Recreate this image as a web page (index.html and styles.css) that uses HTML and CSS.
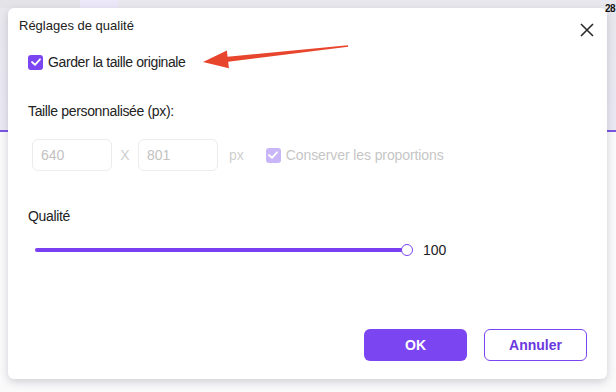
FILE: index.html
```html
<!DOCTYPE html>
<html lang="fr">
<head>
    <meta charset="UTF-8">
    <meta name="viewport" content="width=device-width, initial-scale=1.0">
    <title>Réglages de qualité</title>
    <link rel="stylesheet" href="styles.css">
</head>
<body>
    <!-- app behind the dialog -->
    <div class="app">
        <div class="app-top">
            <div class="app-tabs">
                <span class="tab-gray"></span>
                <span class="tab-active"></span>
            </div>
            <span class="app-count">28</span>
        </div>
        <div class="app-line"></div>
        <div class="app-rest"></div>
    </div>

    <div class="dialog">
        <div class="dialog-head">
            <span class="dialog-title">Réglages de qualité</span>
            <button class="close-btn" aria-label="Fermer">
                <svg width="14" height="14" viewBox="0 0 14 14">
                    <path d="M1 1 L13 13 M13 1 L1 13" stroke="#2b2b2b" stroke-width="1.6" fill="none"/>
                </svg>
            </button>
        </div>

        <div class="dialog-body">
            <label class="check-row">
                <span class="checkbox">
                    <svg width="10" height="8" viewBox="0 0 10 8"><path d="M1 4 L4 6.8 L9 1.3" stroke="#fff" stroke-width="1.8" fill="none" stroke-linecap="round" stroke-linejoin="round"/></svg>
                </span>
                Garder la taille originale
            </label>

            <div class="field-label">Taille personnalisée (px):</div>
            <div class="size-row">
                <div class="size-input">640</div>
                <span class="size-sep">X</span>
                <div class="size-input">801</div>
                <span class="size-unit">px</span>
                <label class="check-row disabled">
                    <span class="checkbox">
                        <svg width="10" height="8" viewBox="0 0 10 8"><path d="M1 4 L4 6.8 L9 1.3" stroke="#fff" stroke-width="1.8" fill="none" stroke-linecap="round" stroke-linejoin="round"/></svg>
                    </span>
                    Conserver les proportions
                </label>
            </div>

            <div class="field-label quality">Qualité</div>
            <div class="slider-row">
                <div class="slider">
                    <div class="slider-fill" style="width: 100%"></div>
                    <span class="slider-knob"></span>
                </div>
                <span class="slider-value">100</span>
            </div>
        </div>

        <div class="dialog-foot">
            <button class="btn btn-primary">OK</button>
            <button class="btn btn-outline">Annuler</button>
        </div>
    </div>

    <!-- red annotation arrow -->
    <svg class="arrow" width="616" height="392" viewBox="0 0 616 392">
        <polygon points="203,62 226.9,50.4 227.6,56.8 347.9,45.2 348.1,46.8 228.2,61.8 228.9,68.2" fill="#e8452d"/>
    </svg>
</body>
</html>
```

FILE: styles.css
```css
* {
    box-sizing: border-box;
}
body {
    margin: 0;
    width: 616px;
    height: 392px;
    overflow: hidden;
    position: relative;
    font-family: "Liberation Sans", Arial, sans-serif;
    color: #222;
    background: #f8f8fa;
}

/* background app */
.app {
    display: flex;
    flex-direction: column;
    height: 100%;
}
.app-top {
    height: 130px;
    background: linear-gradient(180deg, #e9e8ee 0%, #ebe9f2 100%);
    position: relative;
}
.app-tabs {
    display: flex;
    height: 8px;
}
.tab-gray {
    width: 80px;
    background: #e4e4e8;
}
.tab-active {
    width: 38px;
    background: #ece8fa;
}
.app-count {
    position: absolute;
    top: 3px;
    right: 1px;
    z-index: 2;
    font-weight: bold;
    font-size: 10px;
    letter-spacing: -0.5px;
    color: #111;
}
.app-line {
    height: 2px;
    background: #7a55e6;
}
.app-rest {
    flex: 1;
    background: #fafafb;
}

/* dialog */
.dialog {
    position: absolute;
    left: 8px;
    top: 8px;
    width: 599px;
    height: 371px;
    background: #fff;
    border-radius: 6px;
    box-shadow: 0 3px 8px rgba(60, 60, 80, 0.22);
    display: flex;
    flex-direction: column;
}
.dialog-head {
    height: 35px;
    display: flex;
    justify-content: space-between;
    align-items: center;
    padding: 0 13px 0 11px;
}
.dialog-title {
    font-size: 13px;
    line-height: 18px;
}
.close-btn {
    border: none;
    background: none;
    padding: 0;
    margin-top: 8px;
    width: 14px;
    height: 14px;
    display: flex;
    cursor: pointer;
}

.dialog-body {
    padding-left: 20px;
}
.check-row {
    display: flex;
    align-items: center;
    gap: 5px;
    font-size: 14px;
    letter-spacing: -0.4px;
    line-height: 18px;
    margin-top: 10px;
}
.checkbox {
    width: 15px;
    height: 15px;
    border-radius: 3px;
    background: #7b45f2;
    display: flex;
    align-items: center;
    justify-content: center;
}
.check-row.disabled {
    margin: 0 0 0 22px;
    color: #c6c6c6;
    letter-spacing: -0.1px;
}
.check-row.disabled .checkbox {
    background: #c9b6f8;
}

.field-label {
    font-size: 14px;
    letter-spacing: -0.35px;
    line-height: 18px;
    margin-top: 31px;
}
.field-label.quality {
    margin-top: 36px;
}
.size-row {
    display: flex;
    align-items: center;
    margin-top: 19px;
    padding-left: 4px;
    height: 32px;
}
.size-input {
    width: 80px;
    height: 32px;
    border: 1px solid #ececec;
    border-radius: 6px;
    padding-left: 8px;
    display: flex;
    align-items: center;
    font-size: 14px;
    color: #c2c2c2;
}
.size-sep {
    width: 26px;
    text-align: center;
    font-size: 14px;
    color: #cfcfcf;
}
.size-unit {
    margin-left: 11px;
    font-size: 14px;
    color: #cfcfcf;
}

.slider-row {
    display: flex;
    align-items: center;
    margin-top: 18px;
    height: 14px;
    padding-left: 7px;
}
.slider {
    position: relative;
    width: 372px;
    height: 4px;
    border-radius: 2px;
    background: #e4dcfb;
}
.slider-fill {
    height: 100%;
    border-radius: 2px;
    background: #7b3ff2;
}
.slider-knob {
    position: absolute;
    right: -6px;
    top: -4px;
    width: 12px;
    height: 12px;
    border-radius: 50%;
    background: #fff;
    border: 1.5px solid #7b45f2;
}
.slider-value {
    margin-left: 16px;
    font-size: 14px;
}

.dialog-foot {
    margin-top: auto;
    display: flex;
    justify-content: flex-end;
    gap: 17px;
    padding: 0 20px 18px;
}
.btn {
    width: 103px;
    height: 32px;
    border-radius: 6px;
    font-family: "Liberation Sans", Arial, sans-serif;
    font-weight: bold;
    font-size: 14px;
    cursor: pointer;
}
.btn-primary {
    background: #7b45f2;
    border: none;
    color: #fff;
}
.btn-outline {
    background: #fff;
    border: 1px solid #7b45f2;
    color: #6a38e0;
}

.arrow {
    position: absolute;
    left: 0;
    top: 0;
    pointer-events: none;
}
```
